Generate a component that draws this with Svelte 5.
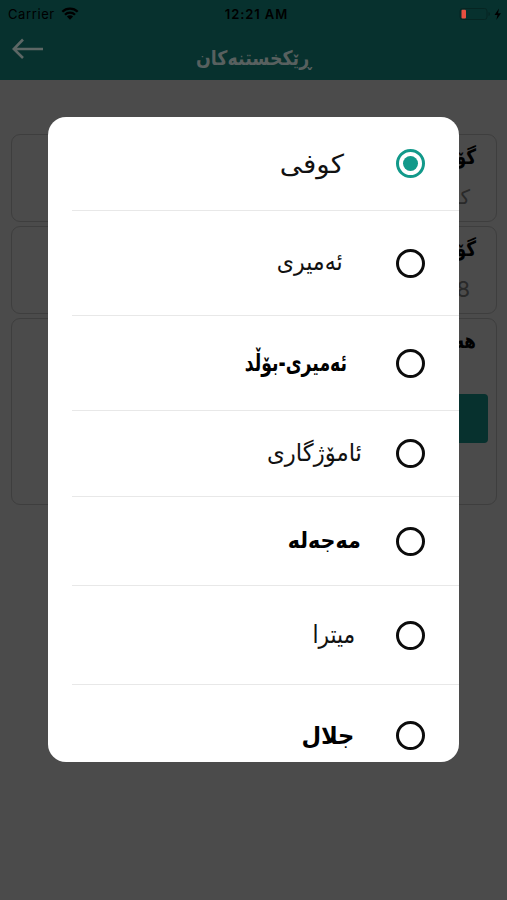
<script>
	let selected = $state('kufi');

	const fonts = [
		{ id: 'kufi', name: 'کوفی', height: 94, size: 26, gap: 52, drop: 0, stretch: 1.07 },
		{ id: 'amiri', name: 'ئەمیری', height: 105, size: 24, gap: 53, drop: -1, stretch: 0.92 },
		{ id: 'amiri-bold', name: 'ئەمیری-بۆڵد', height: 95, size: 24, gap: 49, drop: 0, stretch: 0.72, bold: true },
		{ id: 'amozhgari', name: 'ئامۆژگاری', height: 86, size: 24, gap: 34, drop: -1, stretch: 0.95 },
		{ id: 'majala', name: 'مەجەلە', height: 89, size: 22, gap: 35, drop: 0, stretch: 0.94, bold: true },
		{ id: 'mitra', name: 'میترا', height: 99, size: 25, gap: 41, drop: 0, stretch: 0.87 },
		{ id: 'jalal', name: 'جلال', height: 101, size: 24, gap: 42, drop: 1, stretch: 0.94, bold: true }
	];
</script>

<div class="screen">
	<header>
		<div class="status">
			<div class="carrier">
				<span>Carrier</span>
				<svg width="18" height="13" viewBox="0 0 18 13">
					<path d="M1.3 4.8a11 11 0 0 1 15.4 0M4 7.7a7 7 0 0 1 10 0" fill="none" stroke="#000" stroke-width="2.3" />
					<path d="M5.9 9.5a4.4 4.4 0 0 1 6.2 0L9 12.7z" />
				</svg>
			</div>
			<b>12:21 AM</b>
			<div class="power">
				<svg width="44" height="14" viewBox="0 0 44 14">
					<rect x="1" y="1.5" width="27" height="11" rx="2.5" fill="none" stroke="#062522" />
					<path d="M29.5 5v4q1.5-.6 1.5-2t-1.5-2" fill="#062522" />
					<rect x="2.5" y="2.7" width="4.5" height="8.8" rx="1" fill="#e94f40" />
					<path d="M40 1.5 35.5 8h3l-1.2 5L42 6.3h-3z" />
				</svg>
			</div>
		</div>
		<div class="bar">
			<svg class="back" width="32" height="22" viewBox="0 0 32 22">
				<path d="M11 1.5 1.8 11l9.2 9M2 11h29" />
			</svg>
			<h1>ڕێکخستنەکان</h1>
		</div>
	</header>

	<main>
		<section class="card">
			<h2>گۆڕینی فۆنت</h2>
			<p>کوفی</p>
		</section>
		<section class="card">
			<h2>گۆڕینی قەبارە</h2>
			<p class="number">18</p>
		</section>
		<section class="card tall">
			<h2>هەڵبژاردن</h2>
			<div class="button"></div>
		</section>
	</main>

	<div class="dialog">
		{#each fonts as font}
			<button class="option" style="height: {font.height}px" onclick={() => (selected = font.id)}>
				<span class="radio" class:checked={selected === font.id}></span>
				<span
					class="label"
					class:bold={font.bold}
					style="font-size: {font.size}px; margin-right: {font.gap}px; transform: translateY({font.drop}px) scaleX({font.stretch})"
				>{font.name}</span>
			</button>
		{/each}
	</div>
</div>

<style>
	:global(body) {
		background: #4b4b4b;
	}
	.screen {
		height: 900px;
		position: relative;
		overflow: hidden;
		background: #4b4b4b;
		font-family: 'DejaVu Sans', sans-serif;
		color: #000;
	}
	header {
		height: 80px;
		background: #07312e;
	}
	.status {
		display: grid;
		grid-template-columns: 1fr auto 1fr;
		align-items: center;
		height: 27px;
		padding: 0 4px 0 8px;
		font-family: Inter, sans-serif;
		font-size: 13px;
	}
	.status b {
		padding-left: 2px;
		font-weight: 600;
		letter-spacing: 0.9px;
	}
	.carrier {
		display: flex;
		align-items: center;
		gap: 6px;
		letter-spacing: 0.6px;
	}
	.power {
		display: flex;
		justify-content: flex-end;
	}
	.bar {
		display: grid;
		grid-template-columns: 44px 1fr 44px;
		padding-left: 12px;
		padding-right: 12px;
	}
	.back {
		margin-top: 11px;
		fill: none;
		stroke: #5d6765;
		stroke-width: 2.6;
	}
	h1 {
		margin: 18px 0 0;
		font-size: 20px;
		line-height: 26px;
		text-align: center;
		color: #58605f;
		direction: rtl;
		transform: scaleX(0.87);
	}
	main {
		display: flex;
		flex-direction: column;
		gap: 4px;
		padding: 54px 10px 0 11px;
		direction: rtl;
	}
	.card {
		box-sizing: border-box;
		height: 88px;
		padding: 8px 20px 0;
		border: 1px solid #3e3e3e;
		border-radius: 9px;
	}
	.card.tall {
		height: 187px;
		padding: 8px 8px 0;
	}
	h2 {
		margin: 0;
		font-size: 21px;
		line-height: 28px;
		transform: scaleX(0.8);
		transform-origin: right center;
	}
	.tall h2 {
		padding-right: 15px;
	}
	p {
		margin: 12px 6px 0;
		font-size: 20px;
		line-height: 28px;
		color: #292929;
	}
	.number {
		font-family: Inter, sans-serif;
		font-size: 22px;
	}
	.button {
		width: 140px;
		height: 49px;
		margin-top: 39px;
		border-radius: 4px;
		background: #07312e;
	}
	.dialog {
		position: absolute;
		top: 117px;
		left: 48px;
		width: 411px;
		height: 645px;
		overflow: hidden;
		border-radius: 18px;
		background: #fff;
		direction: rtl;
	}
	.option {
		display: flex;
		align-items: center;
		box-sizing: border-box;
		width: 387px;
		padding: 0 34px 0 0;
		border: none;
		border-bottom: 1px solid #e8e8e8;
		background: none;
		font-family: inherit;
		color: #111;
		cursor: pointer;
	}
	.radio {
		display: flex;
		align-items: center;
		justify-content: center;
		box-sizing: border-box;
		width: 29px;
		height: 29px;
		border: 3px solid #0c0c0c;
		border-radius: 50%;
	}
	.radio.checked {
		border-color: #12998a;
	}
	.radio.checked::after {
		content: '';
		width: 15px;
		height: 15px;
		border-radius: 50%;
		background: #12998a;
	}
	.label {
		line-height: 40px;
		white-space: nowrap;
		transform-origin: right center;
	}
	.bold {
		font-weight: 700;
		color: #000;
	}
</style>
